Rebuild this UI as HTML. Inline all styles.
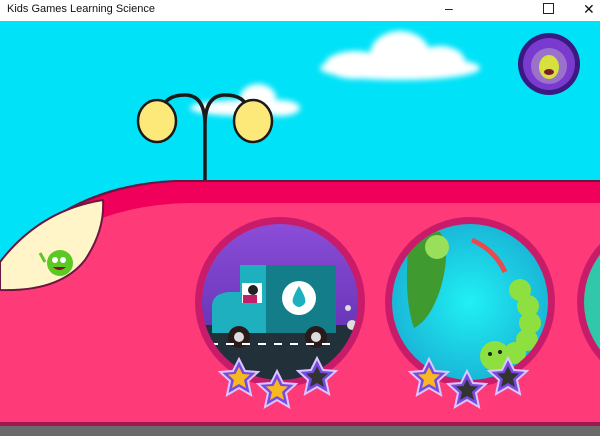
<!DOCTYPE html><html><head><style>body{margin:0;width:600px;height:436px;overflow:hidden;font-family:"Liberation Sans",sans-serif}
.tb{position:absolute;top:0;left:0;width:600px;height:21px;background:#fff;font-size:11px;color:#111}
</style></head><body>
<div class="tb"><span style="position:absolute;left:7px;top:3px">Kids Games Learning Science</span>
<span style="position:absolute;left:445px;top:0;font-size:14px">–</span>
<span style="position:absolute;left:543px;top:3px;width:9px;height:9px;border:1px solid #222"></span>
<span style="position:absolute;left:583px;top:1px;font-size:14px">✕</span></div>
<svg width="600" height="415" style="position:absolute;top:21px;left:0" viewBox="0 21 600 415">
<defs><filter id="b"><feGaussianBlur stdDeviation="3"/></filter>
<radialGradient id="g2" cx="0.5" cy="0.5" r="0.5"><stop offset="0" stop-color="#20f0f4"/><stop offset="1" stop-color="#19b8d8"/></radialGradient>
<linearGradient id="g1" x1="0" y1="0" x2="0" y2="1"><stop offset="0" stop-color="#8a4dd8"/><stop offset="1" stop-color="#5a2aa8"/></linearGradient></defs>
<rect x="0" y="21" width="600" height="415" fill="#00e2f8"/>
<g fill="#fff" filter="url(#b)"><ellipse cx="400" cy="68" rx="80" ry="12"/><ellipse cx="400" cy="55" rx="30" ry="24"/><ellipse cx="355" cy="65" rx="30" ry="14"/><ellipse cx="440" cy="62" rx="25" ry="16"/>
<ellipse cx="245" cy="108" rx="55" ry="8"/><ellipse cx="258" cy="98" rx="18" ry="14"/><ellipse cx="280" cy="108" rx="20" ry="8"/></g>
<path d="M205 180 V125 Q205 95 185 95 Q165 95 162 110 M205 125 Q205 95 225 95 Q245 95 248 110" stroke="#1a1a1a" stroke-width="3.5" fill="none"/>
<ellipse cx="157" cy="121" rx="19" ry="21" fill="#fde97a" stroke="#1a1a1a" stroke-width="2.5"/>
<ellipse cx="253" cy="121" rx="19" ry="21" fill="#fde97a" stroke="#1a1a1a" stroke-width="2.5"/>
<path d="M0 270 Q60 185 175 180 H600 V436 H0 Z" fill="#6a1840"/>
<path d="M0 273 Q60 188 175 182 H600 V422 H0 Z" fill="#f0005a"/>
<path d="M0 290 Q70 205 190 203 H600 V422 H0 Z" fill="#ff3a78"/>
<rect x="0" y="422" width="600" height="4" fill="#a01850"/><rect x="0" y="426" width="600" height="10" fill="#6a6a6a"/>
<path d="M0 290 Q60 292 85 260 Q105 230 103 200 Q40 210 0 262 Z" fill="#fff5c8" stroke="#6a1840" stroke-width="2"/>
<circle cx="60" cy="263" r="13" fill="#5cc823"/><circle cx="55" cy="260" r="3" fill="#fff"/><circle cx="63" cy="260" r="3" fill="#fff"/><path d="M53 267 Q59 273 66 267Z" fill="#8a1020"/><path d="M45 262 L40 253" stroke="#5cc823" stroke-width="3"/>
<circle cx="280" cy="302" r="85" fill="#c81c6a"/><circle cx="280" cy="302" r="78" fill="url(#g1)"/>
<clipPath id="c1"><circle cx="280" cy="302" r="78"/></clipPath>
<g clip-path="url(#c1)"><rect x="200" y="325" width="170" height="70" fill="#22303a"/>
<path d="M212 333 V305 Q213 294 228 292 H240 V265 H330 Q336 265 336 272 V333 Z" fill="#1fb0c0"/><rect x="266" y="265" width="70" height="68" fill="#137e8a"/>
<circle cx="299" cy="298" r="17" fill="#fff"/><path d="M299 286 Q291 299 293 303 Q299 311 305 303 Q307 299 299 286Z" fill="#1fb0c0"/>
<rect x="242" y="283" width="20" height="20" fill="#fff"/><circle cx="253" cy="290" r="5" fill="#222"/><rect x="243" y="295" width="14" height="8" fill="#c0206a"/>
<circle cx="239" cy="337" r="11" fill="#2a1a1a"/><circle cx="239" cy="337" r="5" fill="#ddd"/><circle cx="316" cy="337" r="11" fill="#2a1a1a"/><circle cx="316" cy="337" r="5" fill="#ddd"/>
<path d="M210 344 H335" stroke="#fff" stroke-width="2" stroke-dasharray="8 8"/><circle cx="352" cy="325" r="5" fill="#ddd"/><circle cx="348" cy="308" r="3" fill="#ddd"/></g>
<circle cx="470" cy="302" r="85" fill="#c81c6a"/><circle cx="470" cy="302" r="78" fill="url(#g2)"/>
<clipPath id="c2"><circle cx="470" cy="302" r="78"/></clipPath>
<g clip-path="url(#c2)">
<path d="M408 250 Q418 232 440 232 Q452 250 440 290 Q430 320 414 328 Q404 300 408 250Z" fill="#3f9a30"/><circle cx="437" cy="247" r="12" fill="#9adf5a"/>
<path d="M472 240 Q495 250 505 272" stroke="#e84a50" stroke-width="5" fill="none"/>
<g fill="#8ee040"><circle cx="520" cy="290" r="11"/><circle cx="528" cy="306" r="11"/><circle cx="530" cy="323" r="11"/><circle cx="527" cy="340" r="11"/><circle cx="515" cy="353" r="11"/><circle cx="495" cy="356" r="15"/></g>
<circle cx="490" cy="354" r="2" fill="#222"/><circle cx="500" cy="352" r="2" fill="#222"/></g>
<circle cx="662" cy="302" r="85" fill="#c81c6a"/><circle cx="662" cy="302" r="78" fill="#30c8a8"/>
<circle cx="549" cy="64" r="31" fill="#3a1a80"/><circle cx="549" cy="64" r="26" fill="#7a3ad0"/><circle cx="549" cy="66" r="18" fill="#9a72cc"/>
<ellipse cx="549" cy="67" rx="10" ry="12" fill="#d8e040"/><ellipse cx="549" cy="72" rx="5" ry="3" fill="#7a1a2a"/>
<g id="s"><path d="M0 -19 L6 -7 L19 -6 L9 3 L12 17 L0 10 L-12 17 L-9 3 L-19 -6 L-6 -7Z" fill="#7a4ae0" stroke="#d8c8ff" stroke-width="2"/></g>
<g transform="translate(239,378)"><use href="#s"/><path d="M0 -11 L3.5 -4 L11 -3.5 L5 2 L7 10 L0 6 L-7 10 L-5 2 L-11 -3.5 L-3.5 -4Z" fill="#f8b820"/></g>
<g transform="translate(277,390)"><use href="#s"/><path d="M0 -11 L3.5 -4 L11 -3.5 L5 2 L7 10 L0 6 L-7 10 L-5 2 L-11 -3.5 L-3.5 -4Z" fill="#f8b820"/></g>
<g transform="translate(317,377)"><use href="#s"/><path d="M0 -11 L3.5 -4 L11 -3.5 L5 2 L7 10 L0 6 L-7 10 L-5 2 L-11 -3.5 L-3.5 -4Z" fill="#333"/></g>
<g transform="translate(429,378)"><use href="#s"/><path d="M0 -11 L3.5 -4 L11 -3.5 L5 2 L7 10 L0 6 L-7 10 L-5 2 L-11 -3.5 L-3.5 -4Z" fill="#f8b820"/></g>
<g transform="translate(467,390)"><use href="#s"/><path d="M0 -11 L3.5 -4 L11 -3.5 L5 2 L7 10 L0 6 L-7 10 L-5 2 L-11 -3.5 L-3.5 -4Z" fill="#333"/></g>
<g transform="translate(508,377)"><use href="#s"/><path d="M0 -11 L3.5 -4 L11 -3.5 L5 2 L7 10 L0 6 L-7 10 L-5 2 L-11 -3.5 L-3.5 -4Z" fill="#333"/></g>
</svg></body></html>
